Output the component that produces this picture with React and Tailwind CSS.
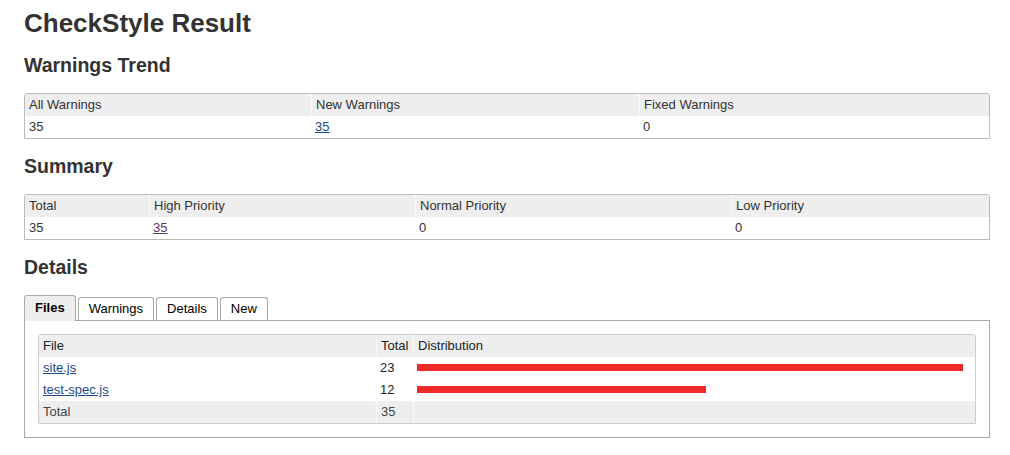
const files = [
  { name: 'site.js', total: 23, bar: 546 },
  { name: 'test-spec.js', total: 12, bar: 289 },
]

function HeadCell({ children, first }) {
  return (
    <div
      className={
        'h-[22px] rounded-t-[3px] bg-[#eeeeee] pl-[4px] font-normal leading-[22px] ' +
        (first ? '' : 'border-l border-[#f8f8f8]')
      }
    >
      {children}
    </div>
  )
}

function BodyCell({ children }) {
  return <div className="h-[22px] pl-[4px] leading-[22px]">{children}</div>
}

function Pane({ cols, head, body }) {
  return (
    <div className={'grid rounded-t-[3px] border border-[#bbbbbb] ' + cols}>
      {head.map((h, i) => (
        <HeadCell key={h} first={i === 0}>
          {h}
        </HeadCell>
      ))}
      {body.map((b, i) => (
        <BodyCell key={i}>{b}</BodyCell>
      ))}
    </div>
  )
}

function Heading({ children }) {
  return (
    <h2 className="mt-[15px] text-[19.5px] font-bold leading-[24px] text-[#333333]">
      {children}
    </h2>
  )
}

export default function App() {
  const tabs = ['Files', 'Warnings', 'Details', 'New']

  return (
    <div className="min-h-[455px] bg-white pl-[24px] pr-[20px] pt-[8px] font-['Liberation_Sans',Arial,sans-serif] text-[13px] text-[#333333]">
      <h1 className="text-[26px] font-bold leading-[30px]">CheckStyle Result</h1>

      <Heading>Warnings Trend</Heading>
      <div className="mt-[16px]">
        <Pane
          cols="grid-cols-[286px_328px_1fr]"
          head={['All Warnings', 'New Warnings', 'Fixed Warnings']}
          body={[
            '35',
            <a key="n" href="#" className="text-[#204a87] underline">35</a>,
            '0',
          ]}
        />
      </div>

      <Heading>Summary</Heading>
      <div className="mt-[16px]">
        <Pane
          cols="grid-cols-[124px_266px_316px_1fr]"
          head={['Total', 'High Priority', 'Normal Priority', 'Low Priority']}
          body={[
            '35',
            <a key="h" href="#" className="text-[#5c3566] underline">35</a>,
            '0',
            '0',
          ]}
        />
      </div>

      <Heading>Details</Heading>
      <div className="relative z-10 mt-[16px] flex h-[26px] items-end gap-[2px]">
        {tabs.map((t, i) =>
          i === 0 ? (
            <div
              key={t}
              className="h-[26px] rounded-t-[3px] border-x border-t border-[#aaaaaa] bg-[#eeeeee] px-[10px] pt-[1px] font-bold leading-[21px] text-black"
            >
              {t}
            </div>
          ) : (
            <div
              key={t}
              className="mb-[1px] h-[23px] rounded-t-[3px] border-x border-t border-[#aaaaaa] bg-white px-[10px] leading-[21px] text-black"
            >
              {t}
            </div>
          ),
        )}
      </div>
      <div className="mt-[-1px] border border-[#aaaaaa] bg-white p-[13px]">
        <div className="grid grid-cols-[337px_37px_1fr] rounded-t-[3px] border border-[#cccccc] text-[#222222]">
          <HeadCell first>File</HeadCell>
          <HeadCell>Total</HeadCell>
          <HeadCell>Distribution</HeadCell>
          {files.map((f) => (
            <div key={f.name} className="contents">
              <BodyCell>
                <a href="#" className="text-[#204a87] underline">
                  {f.name}
                </a>
              </BodyCell>
              <BodyCell>{f.total}</BodyCell>
              <div className="flex h-[21px] items-center pl-[4px]">
                <div className="h-[7px] bg-[#ef2929]" style={{ width: f.bar }} />
              </div>
            </div>
          ))}
          <div className="contents text-[#444444]">
            <HeadCell first>Total</HeadCell>
            <HeadCell>35</HeadCell>
            <HeadCell> </HeadCell>
          </div>
        </div>
      </div>
    </div>
  )
}
